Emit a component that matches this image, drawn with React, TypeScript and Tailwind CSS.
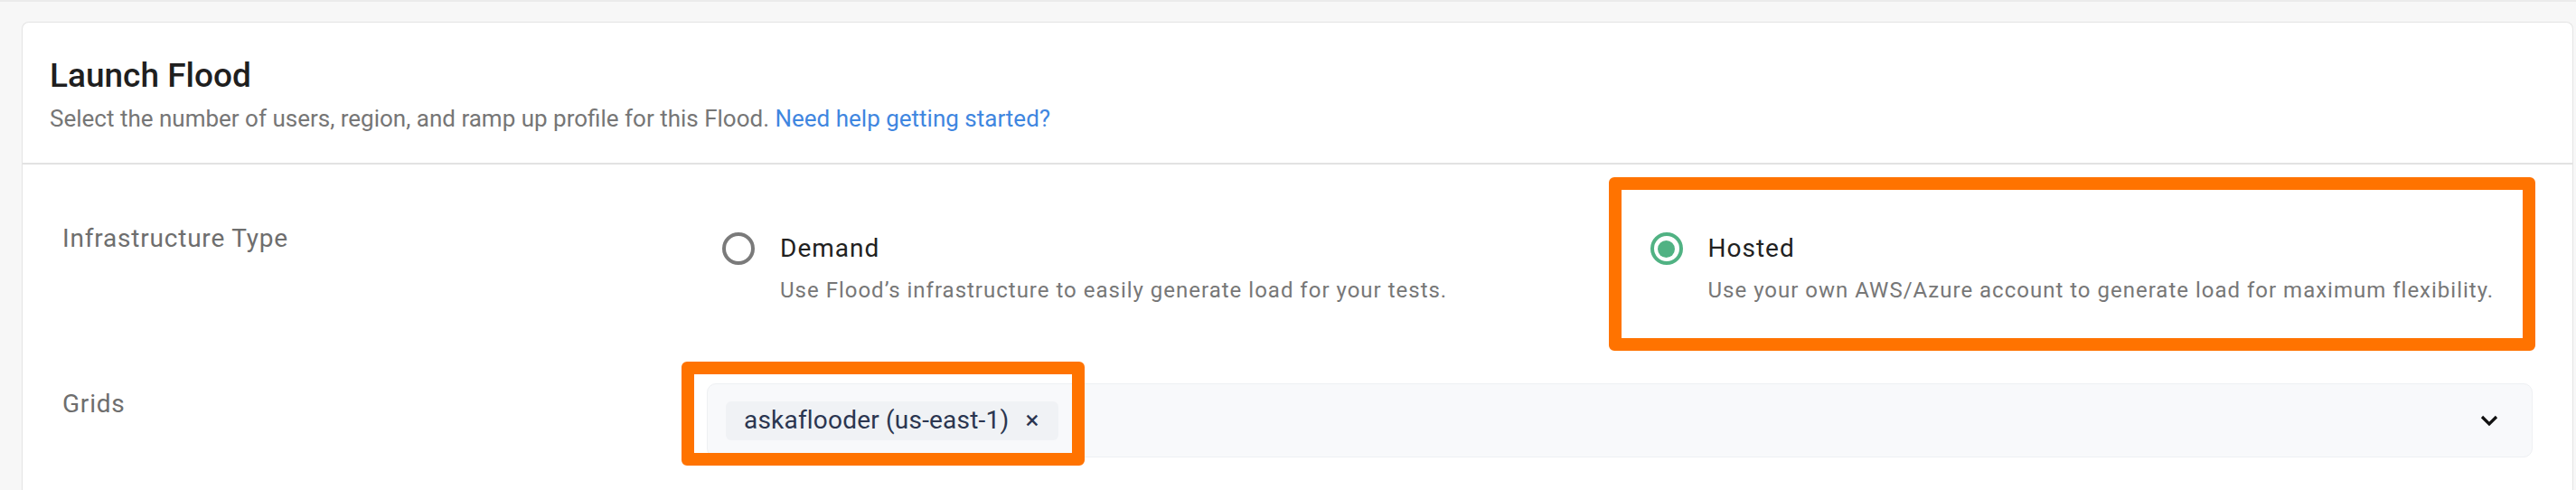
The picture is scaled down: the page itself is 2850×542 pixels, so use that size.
import React from 'react';

const Radio = ({ checked }: { checked?: boolean }) =>
  checked ? (
    <span className="flex h-[36px] w-[36px] shrink-0 items-center justify-center rounded-full border-[4px] border-[#50b283] bg-white">
      <span className="h-[19px] w-[19px] rounded-full bg-[#50b283]" />
    </span>
  ) : (
    <span className="h-[36px] w-[36px] shrink-0 rounded-full border-[4px] border-[#7a7a7a] bg-white" />
  );

const Option = ({
  title,
  desc,
  checked,
  highlight,
}: {
  title: string;
  desc: string;
  checked?: boolean;
  highlight?: boolean;
}) => (
  <div className="relative pl-[17px] pt-[11px]">
    {highlight && (
      <div className="pointer-events-none absolute left-[-29px] top-[-48px] h-[192px] w-[1025px] rounded-[6px] border-[14px] border-[#ff7300]" />
    )}
    <div className="flex items-center gap-[28px]">
      <Radio checked={checked} />
      <span className="text-[28px] leading-[40px] tracking-[1px] text-[#212121]">{title}</span>
    </div>
    <p className="mt-[8px] pl-[64px] text-[24px] leading-[36px] tracking-[1px] text-[#777777]">{desc}</p>
  </div>
);

const App = () => {
  return (
    <div className="min-h-[542px] bg-[#f7f7f7] font-['Roboto',sans-serif]">
      <div className="h-[2px] bg-[#ebebeb]" />
      <div className="ml-[24px] mr-[3px] mt-[22px] h-[520px] rounded-t-[8px] border border-b-0 border-[#e4e4e4] bg-white">
        <div className="border-b-2 border-[#e2e2e2] px-[30px] pb-[31px] pt-[37px]">
          <h1 className="text-[37px] font-medium leading-[44px] text-[#1f1f1f]">Launch Flood</h1>
          <p className="mt-[7px] text-[26px] leading-[36px] text-[#767676]">
            Select the number of users, region, and ramp up profile for this Flood.{' '}
            <a href="#" className="text-[#3f86e0]">
              Need help getting started?
            </a>
          </p>
        </div>

        <div className="pl-[44px] pr-[44px] pt-[62px]">
          <div className="flex">
            <div className="w-[713px] shrink-0 text-[28px] leading-[40px] tracking-[0.8px] text-[#6e6e6e]">
              Infrastructure Type
            </div>
            <div className="grid flex-1 grid-cols-2 gap-[33px]">
              <Option
                title="Demand"
                desc="Use Flood’s infrastructure to easily generate load for your tests."
              />
              <Option
                title="Hosted"
                checked
                highlight
                desc="Use your own AWS/Azure account to generate load for maximum flexibility."
              />
            </div>
          </div>

          <div className="mt-[85px] flex">
            <div className="w-[713px] shrink-0 pt-[3px] text-[28px] leading-[40px] tracking-[0.8px] text-[#6e6e6e]">
              Grids
            </div>
            <div className="relative flex h-[82px] flex-1 items-center justify-between rounded-[10px] border border-[#eef0f3] bg-[#f8f9fb] pl-[20px] pr-[37px]">
              <div className="pointer-events-none absolute left-[-29px] top-[-25px] h-[115px] w-[446px] rounded-[6px] border-[14px] border-[#ff7300]" />
              <span className="flex h-[43px] items-center gap-[18px] rounded-[6px] bg-[#f0f2f5] pl-[20px] pr-[21px] text-[28px] tracking-[0.2px] text-[#2b3650]">
                askaflooder (us-east-1)
                <span className="text-[28px] leading-none">×</span>
              </span>
              <svg width="20" height="13" viewBox="0 0 20 13" fill="none">
                <path d="M2 2l8 8 8-8" stroke="#111" strokeWidth="3.2" />
              </svg>
            </div>
          </div>
        </div>
      </div>
    </div>
  );
};

export default App;
